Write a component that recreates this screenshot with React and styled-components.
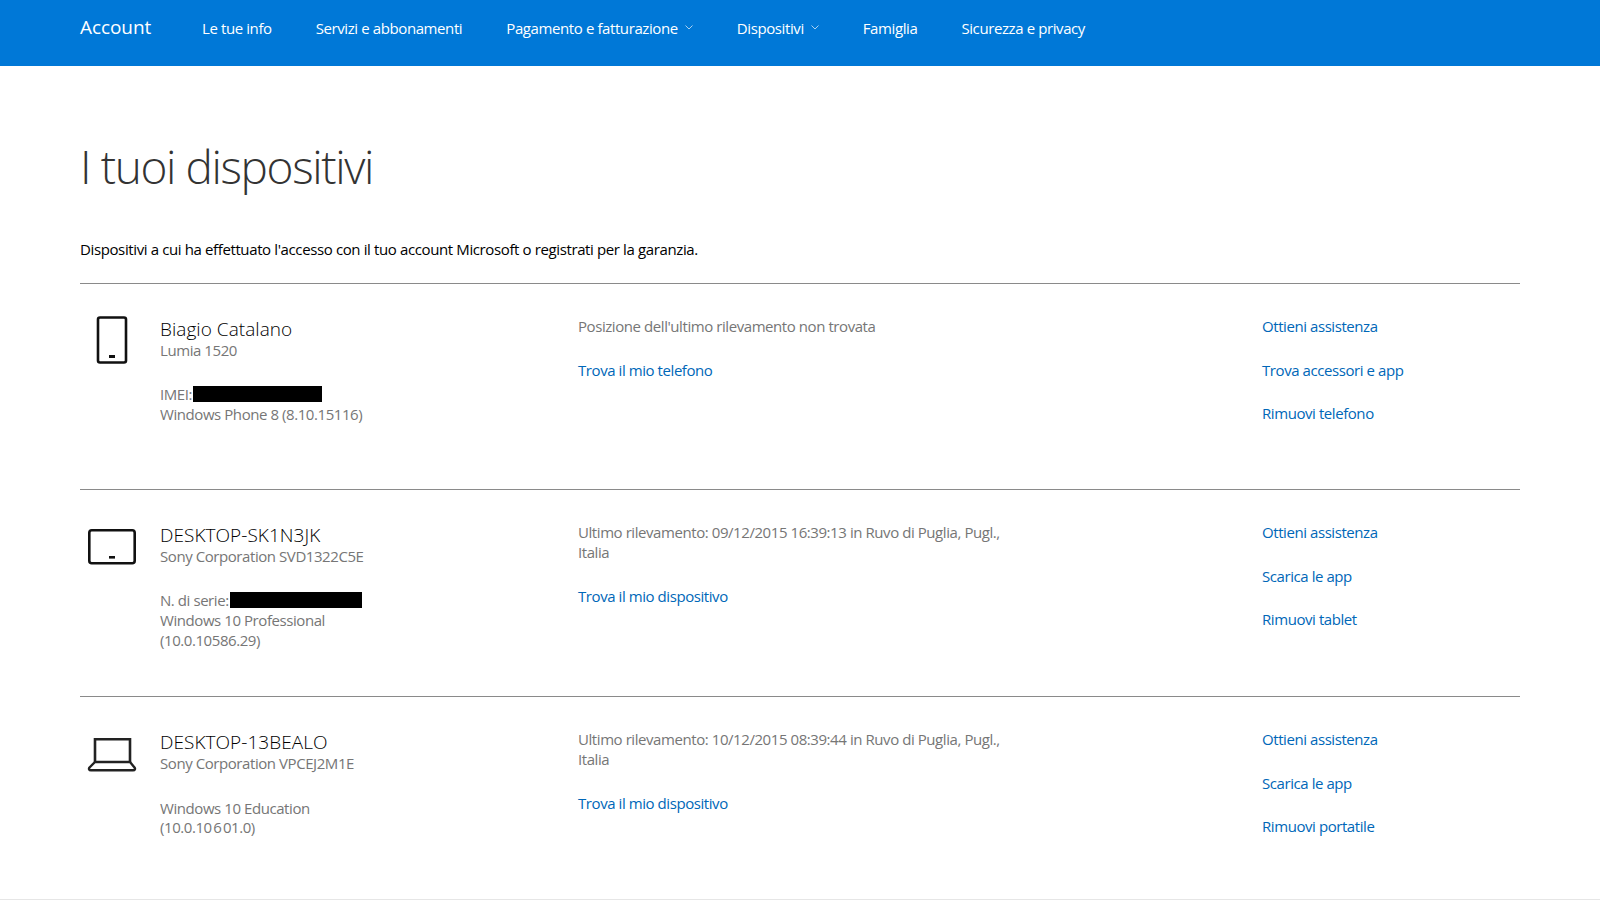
import React from "react";
import styled, { createGlobalStyle } from "styled-components";

const Global = createGlobalStyle`
  html, body { margin: 0; padding: 0; background: #fff; }
  body { font-family: "Open Sans", "Noto Sans", sans-serif; overflow: hidden; }
`;

const Page = styled.div`
  width: 1600px;
  height: 900px;
  overflow: hidden;
  display: flex;
  flex-direction: column;
`;

const Header = styled.header`
  height: 66px;
  flex: none;
  background: #0078d7;
  display: flex;
  align-items: center;
  padding: 0 80px 11px;
  box-sizing: border-box;
  color: #fff;
`;

const Brand = styled.a`
  font-size: 19px;
  letter-spacing: -0.08px;
  width: 122px;
  margin-top: -1px;
`;

const Nav = styled.nav`
  display: flex;
  gap: 44px;
`;

const NavItem = styled.a`
  display: flex;
  align-items: center;
  gap: 7px;
  font-size: 15px;
  letter-spacing: -0.4px;
`;

const Main = styled.main`
  flex: 1;
  padding: 0 80px;
`;

const Title = styled.h1`
  margin: 0;
  padding-top: 69px;
  font-size: 46px;
  line-height: 62px;
  font-weight: 300;
  letter-spacing: -1.4px;
  color: #333;
`;

const Intro = styled.p`
  margin: 42px 0 0;
  font-size: 15px;
  line-height: 20px;
  letter-spacing: -0.38px;
  color: #000;
  padding-bottom: 24px;
`;

const Row = styled.section`
  display: grid;
  grid-template-columns: 80px 418px 684px 1fr;
  height: ${(p) => p.$height}px;
  box-sizing: border-box;
  border-top: 1px solid #8a8a8a;
`;

const IconCell = styled.div`
  padding-top: 24px;
  svg { display: block; }
`;

const Info = styled.div`
  padding-top: 34px;
`;

const Name = styled.div`
  font-size: 19px;
  line-height: 22px;
  font-weight: 300;
  letter-spacing: 0.05px;
  color: #000;
`;

const Detail = styled.div`
  font-size: 15px;
  line-height: 20px;
  letter-spacing: -0.43px;
  color: #767676;
`;

const Serial = styled(Detail)`
  margin-top: 25px;
  height: 18.5px;
  display: flex;
  align-items: center;
`;

const Block = styled.span`
  display: inline-block;
  width: ${(p) => p.$width}px;
  height: 16px;
  margin-left: 1px;
  background: #000;
`;

const OsLine = styled(Detail)`
  margin-top: ${(p) => p.$top || 0}px;
  line-height: ${(p) => p.$line}px;
`;

const Kern = styled.span`
  padding: 0 1.5px;
`;

const Middle = styled.div`
  padding-top: 32px;
  width: 430px;
`;

const Actions = styled.div`
  padding-top: 32px;
  display: flex;
  flex-direction: column;
  gap: 23.5px;
`;

const Link = styled.a`
  display: block;
  font-size: 15px;
  line-height: 20px;
  letter-spacing: -0.43px;
  color: #0067b8;
`;

const MiddleLink = styled(Link)`
  margin-top: 24px;
`;

const FootLine = styled.div`
  height: 1px;
  flex: none;
  background: #e6e6e6;
`;

const Chevron = () => (
  <svg width="8" height="5" viewBox="0 0 8 5" fill="none" stroke="#a9d0f0" strokeWidth="1">
    <path d="M0.5 0.5 L4 4 L7.5 0.5" />
  </svg>
);

const ICONS = {
  phone: (
    <>
      <rect x="18" y="9.5" width="28" height="45" rx="2" fill="none" stroke="#111" strokeWidth="2.6" />
      <rect x="29" y="47" width="6" height="3" fill="#111" />
    </>
  ),
  tablet: (
    <>
      <rect x="9.3" y="16.3" width="45.4" height="33" rx="2.5" fill="none" stroke="#111" strokeWidth="2.6" />
      <rect x="29" y="42" width="6" height="2.6" fill="#111" />
    </>
  ),
  laptop: (
    <>
      <path d="M15 41 V18.2 H50 V41" fill="none" stroke="#222" strokeWidth="2.6" />
      <path
        d="M15 41 H50 L54.5 46.5 C55.5 48 55 49.3 53 49.3 H11 C9 49.3 8.5 48 9.5 46.5 Z"
        fill="none"
        stroke="#222"
        strokeWidth="2.4"
        strokeLinejoin="round"
      />
    </>
  ),
};

const DeviceIcon = ({ type }) => (
  <svg width="64" height="64" viewBox="0 0 64 64">
    {ICONS[type]}
  </svg>
);

const DEVICES = [
  {
    icon: "phone",
    height: 206,
    name: "Biagio Catalano",
    model: "Lumia 1520",
    serial: { label: "IMEI:", width: 129 },
    os: ["Windows Phone 8 (8.10.15116)"],
    location: ["Posizione dell'ultimo rilevamento non trovata"],
    find: "Trova il mio telefono",
    actions: ["Ottieni assistenza", "Trova accessori e app", "Rimuovi telefono"],
  },
  {
    icon: "tablet",
    height: 207,
    name: "DESKTOP-SK1N3JK",
    model: "Sony Corporation SVD1322C5E",
    serial: { label: "N. di serie:", width: 132 },
    os: ["Windows 10 Professional", "(10.0.10586.29)"],
    location: ["Ultimo rilevamento: 09/12/2015 16:39:13 in Ruvo di Puglia, Pugl.,", "Italia"],
    find: "Trova il mio dispositivo",
    actions: ["Ottieni assistenza", "Scarica le app", "Rimuovi tablet"],
  },
  {
    icon: "laptop",
    height: 202,
    name: "DESKTOP-13BEALO",
    model: "Sony Corporation VPCEJ2M1E",
    osLine: 18.5,
    os: [
      "Windows 10 Education",
      <>
        (10.0.10<Kern>6</Kern>01.0)
      </>,
    ],
    location: ["Ultimo rilevamento: 10/12/2015 08:39:44 in Ruvo di Puglia, Pugl.,", "Italia"],
    find: "Trova il mio dispositivo",
    actions: ["Ottieni assistenza", "Scarica le app", "Rimuovi portatile"],
  },
];

const App = () => (
  <Page>
    <Global />
    <Header>
      <Brand>Account</Brand>
      <Nav>
        <NavItem>Le tue info</NavItem>
        <NavItem>Servizi e abbonamenti</NavItem>
        <NavItem>
          Pagamento e fatturazione <Chevron />
        </NavItem>
        <NavItem>
          Dispositivi <Chevron />
        </NavItem>
        <NavItem>Famiglia</NavItem>
        <NavItem>Sicurezza e privacy</NavItem>
      </Nav>
    </Header>
    <Main>
      <Title>I tuoi dispositivi</Title>
      <Intro>
        Dispositivi a cui ha effettuato l'accesso con il tuo account Microsoft o registrati per la garanzia.
      </Intro>
      {DEVICES.map((d) => (
        <Row key={d.name} $height={d.height}>
          <IconCell>
            <DeviceIcon type={d.icon} />
          </IconCell>
          <Info>
            <Name>{d.name}</Name>
            <Detail>{d.model}</Detail>
            {d.serial && (
              <Serial>
                {d.serial.label}
                <Block $width={d.serial.width} />
              </Serial>
            )}
            {d.os.map((line, i) => (
              <OsLine key={i} $top={!d.serial && i === 0 ? 26 : 0} $line={d.osLine || 20}>
                {line}
              </OsLine>
            ))}
          </Info>
          <Middle>
            {d.location.map((line) => (
              <Detail key={line}>{line}</Detail>
            ))}
            <MiddleLink>{d.find}</MiddleLink>
          </Middle>
          <Actions>
            {d.actions.map((a) => (
              <Link key={a}>{a}</Link>
            ))}
          </Actions>
        </Row>
      ))}
    </Main>
    <FootLine />
  </Page>
);

export default App;
